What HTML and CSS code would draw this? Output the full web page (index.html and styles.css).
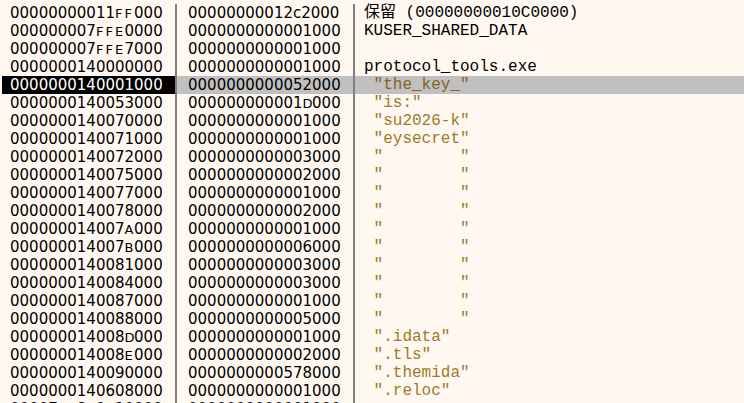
FILE: index.html
```html
<!DOCTYPE html>
<html lang="en">
<head>
    <meta charset="UTF-8">
    <title>Memory Map</title>
    <link rel="stylesheet" href="styles.css">
</head>
<body>
    <div class="map">
        <div class="row"><div class="addr">00000000011<span class="hx">F</span><span class="hx">F</span>000</div><div class="size">00000000012c2000</div><div class="info">保留 (00000000010C0000)</div></div>
        <div class="row"><div class="addr">000000007<span class="hx">F</span><span class="hx">F</span><span class="hx">E</span>0000</div><div class="size">0000000000001000</div><div class="info">KUSER_SHARED_DATA</div></div>
        <div class="row"><div class="addr">000000007<span class="hx">F</span><span class="hx">F</span><span class="hx">E</span>7000</div><div class="size">0000000000001000</div><div class="info"></div></div>
        <div class="row"><div class="addr">0000000140000000</div><div class="size">0000000000001000</div><div class="info">protocol_tools.exe</div></div>
        <div class="row sel"><div class="addr">0000000140001000</div><div class="size">0000000000052000</div><div class="info str"> "the_key_"</div></div>
        <div class="row"><div class="addr">0000000140053000</div><div class="size">000000000001<span class="hx">D</span>000</div><div class="info str"> "is:"</div></div>
        <div class="row"><div class="addr">0000000140070000</div><div class="size">0000000000001000</div><div class="info str"> "su2026-k"</div></div>
        <div class="row"><div class="addr">0000000140071000</div><div class="size">0000000000001000</div><div class="info str"> "eysecret"</div></div>
        <div class="row"><div class="addr">0000000140072000</div><div class="size">0000000000003000</div><div class="info str"> "        "</div></div>
        <div class="row"><div class="addr">0000000140075000</div><div class="size">0000000000002000</div><div class="info str"> "        "</div></div>
        <div class="row"><div class="addr">0000000140077000</div><div class="size">0000000000001000</div><div class="info str"> "        "</div></div>
        <div class="row"><div class="addr">0000000140078000</div><div class="size">0000000000002000</div><div class="info str"> "        "</div></div>
        <div class="row"><div class="addr">000000014007<span class="hx">A</span>000</div><div class="size">0000000000001000</div><div class="info str"> "        "</div></div>
        <div class="row"><div class="addr">000000014007<span class="hx">B</span>000</div><div class="size">0000000000006000</div><div class="info str"> "        "</div></div>
        <div class="row"><div class="addr">0000000140081000</div><div class="size">0000000000003000</div><div class="info str"> "        "</div></div>
        <div class="row"><div class="addr">0000000140084000</div><div class="size">0000000000003000</div><div class="info str"> "        "</div></div>
        <div class="row"><div class="addr">0000000140087000</div><div class="size">0000000000001000</div><div class="info str"> "        "</div></div>
        <div class="row"><div class="addr">0000000140088000</div><div class="size">0000000000005000</div><div class="info str"> "        "</div></div>
        <div class="row"><div class="addr">000000014008<span class="hx">D</span>000</div><div class="size">0000000000001000</div><div class="info str"> ".idata"</div></div>
        <div class="row"><div class="addr">000000014008<span class="hx">E</span>000</div><div class="size">0000000000002000</div><div class="info str"> ".tls"</div></div>
        <div class="row"><div class="addr">0000000140090000</div><div class="size">0000000000578000</div><div class="info str"> ".themida"</div></div>
        <div class="row"><div class="addr">0000000140608000</div><div class="size">0000000000001000</div><div class="info str"> ".reloc"</div></div>
        <div class="row"><div class="addr">00007<span class="hx">F</span><span class="hx">F</span>8<span class="hx">A</span>0<span class="hx">B</span>10000</div><div class="size">0000000000001000</div><div class="info"></div></div>
    </div>
</body>
</html>
```

FILE: styles.css
```css
html, body {
    margin: 0;
    padding: 0;
    height: 403px;
    overflow: hidden;
    background-color: #fff8f0;
}
.map {
    padding-top: 4px;
    font-family: "DejaVu Sans", sans-serif;
    font-size: 15px;
    color: #000;
}
.row {
    display: flex;
    height: 18px;
    line-height: 18px;
    white-space: pre;
}
.addr {
    width: 165px;
    margin-left: 2px;
    padding-left: 8px;
}
.size {
    width: 165px;
    padding-left: 11px;
    border-left: 2px solid #808080;
}
.info {
    flex: 1;
    padding-left: 9px;
    border-left: 2px solid #808080;
    font-family: "Liberation Mono", "Noto Sans CJK SC", monospace;
    font-size: 16px;
    padding-top: 1px;
    height: 17px;
    line-height: 17px;
}
.hx {
    display: inline-block;
    width: 9.54px;
    font-size: 13px;
}
.str {
    color: #a0782a;
}
.sel .addr {
    background-color: #000;
    color: #fff;
}
.sel .size, .sel .info {
    background-color: #c0c0c0;
}
.sel .str {
    color: #846424;
}
```
